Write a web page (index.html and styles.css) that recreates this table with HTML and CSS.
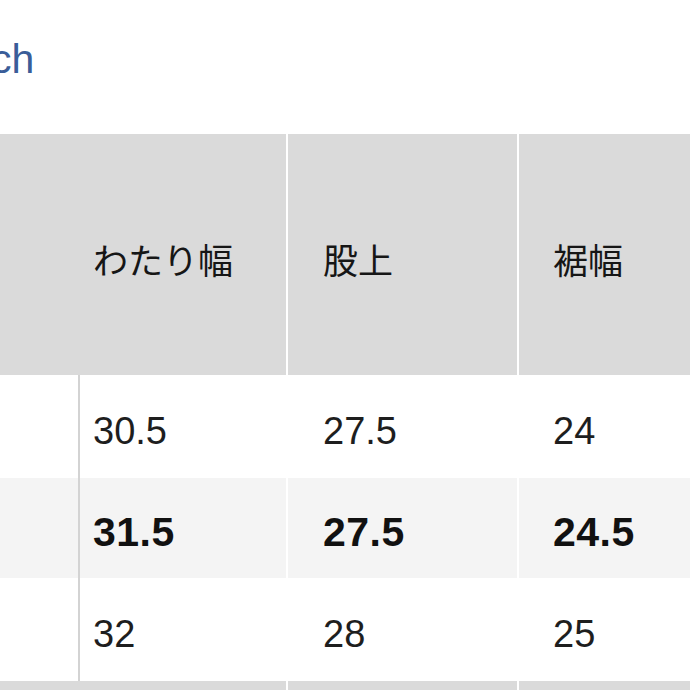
FILE: index.html
```html
<!DOCTYPE html>
<html lang="ja">
<head>
<meta charset="utf-8">
<link rel="stylesheet" href="styles.css">
</head>
<body>
<div class="page">
  <div class="unit"><span class="unit-label">ch</span></div>
  <div class="table">
    <div class="row head">
      <div class="cell c0"></div>
      <div class="cell c1">わたり幅</div>
      <div class="cell c2">股上</div>
      <div class="cell c3">裾幅</div>
    </div>
    <div class="row body r1">
      <div class="cell c0"></div>
      <div class="cell c1">30.5</div>
      <div class="cell c2">27.5</div>
      <div class="cell c3">24</div>
    </div>
    <div class="row body r2 alt strong">
      <div class="cell c0"></div>
      <div class="cell c1">31.5</div>
      <div class="cell c2">27.5</div>
      <div class="cell c3">24.5</div>
    </div>
    <div class="row body r3">
      <div class="cell c0"></div>
      <div class="cell c1">32</div>
      <div class="cell c2">28</div>
      <div class="cell c3">25</div>
    </div>
    <div class="row head next">
      <div class="cell c0"></div>
      <div class="cell c1"></div>
      <div class="cell c2"></div>
      <div class="cell c3"></div>
    </div>
  </div>
</div>
</body>
</html>
```

FILE: styles.css
```css
html, body {
  margin: 0;
  padding: 0;
  background: #ffffff;
}

.page {
  width: 690px;
  height: 690px;
  overflow: hidden;
  font-family: "Liberation Sans", "Noto Sans CJK JP", sans-serif;
}

.unit {
  height: 134px;
  box-sizing: border-box;
  padding-top: 39px;
}

.unit-label {
  display: block;
  margin-left: -9px;
  font-size: 41px;
  line-height: 1;
  color: #3a5d98;
}

.row {
  display: grid;
  grid-template-columns: 78px 208px 231px 1fr;
}

.cell {
  display: flex;
  align-items: center;
  box-sizing: border-box;
}

.head {
  background: #dadada;
  height: 241px;
}

.head .cell {
  font-family: "Noto Sans CJK JP", sans-serif;
  font-size: 35px;
  line-height: 1;
  color: #161616;
  padding-top: 8px;
}

.head .c1 {
  padding-left: 15px;
}

.head .c2,
.head .c3,
.body .c2,
.body .c3 {
  border-left: 2px solid #ffffff;
}

.head .c2 {
  padding-left: 35px;
}

.head .c3 {
  padding-left: 34px;
}

.body .cell {
  font-size: 38px;
  line-height: 1;
  color: #1e1e1e;
  padding-top: 9px;
}

.body .c1 {
  border-left: 2px solid #d3d3d3;
  padding-left: 13px;
}

.body .c2 {
  padding-left: 35px;
}

.body .c3 {
  padding-left: 34px;
}

.r1 { height: 103px; }
.r2 { height: 100px; }
.r3 { height: 103px; }

.alt {
  background: #f4f4f4;
}

.strong .cell {
  font-weight: bold;
  color: #111111;
  font-size: 41px;
  letter-spacing: 0.5px;
}

.next {
  height: 20px;
}

.next .cell {
  padding: 0;
}
```
